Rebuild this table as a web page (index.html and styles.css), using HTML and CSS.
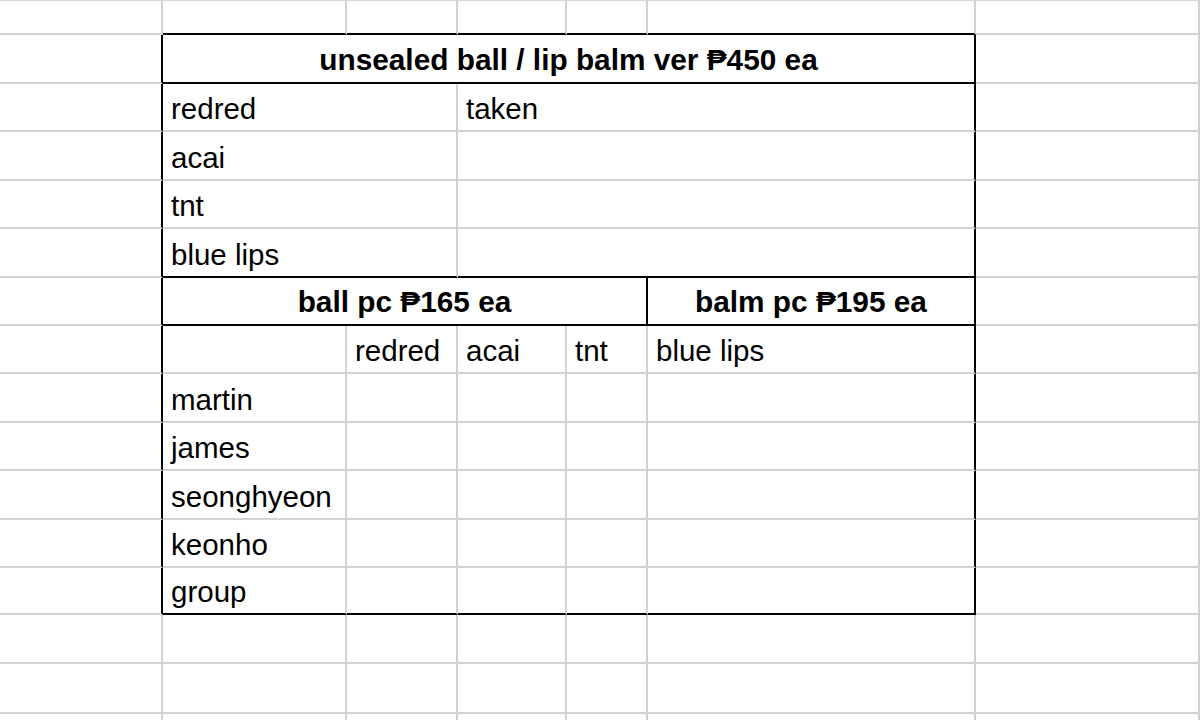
FILE: index.html
```html
<!DOCTYPE html>
<html>
<head>
<meta charset="utf-8">
<link rel="stylesheet" href="styles.css">
</head>
<body>
<div class="sheet">
  <!-- row 0 -->
  <div class="c"></div><div class="c bb"></div><div class="c bb"></div><div class="c bb"></div><div class="c bb"></div><div class="c bb"></div><div class="c"></div>
  <!-- row 1 header -->
  <div class="c br"></div><div class="c s5 bb br hd">unsealed ball / lip balm ver ₱450 ea</div><div class="c"></div>
  <!-- rows 2-5 -->
  <div class="c br"></div><div class="c s2">redred</div><div class="c s3 br">taken</div><div class="c"></div>
  <div class="c br"></div><div class="c s2">acai</div><div class="c s3 br"></div><div class="c"></div>
  <div class="c br"></div><div class="c s2">tnt</div><div class="c s3 br"></div><div class="c"></div>
  <div class="c br"></div><div class="c s2 bb">blue lips</div><div class="c s3 br bb"></div><div class="c"></div>
  <!-- row 6 -->
  <div class="c br"></div><div class="c s4 bb br hd">ball pc ₱165 ea</div><div class="c bb br hd">balm pc ₱195 ea</div><div class="c"></div>
  <!-- row 7 -->
  <div class="c br"></div><div class="c"></div><div class="c">redred</div><div class="c">acai</div><div class="c">tnt</div><div class="c br">blue lips</div><div class="c"></div>
  <!-- rows 8-12 -->
  <div class="c br"></div><div class="c">martin</div><div class="c"></div><div class="c"></div><div class="c"></div><div class="c br"></div><div class="c"></div>
  <div class="c br"></div><div class="c">james</div><div class="c"></div><div class="c"></div><div class="c"></div><div class="c br"></div><div class="c"></div>
  <div class="c br"></div><div class="c">seonghyeon</div><div class="c"></div><div class="c"></div><div class="c"></div><div class="c br"></div><div class="c"></div>
  <div class="c br"></div><div class="c">keonho</div><div class="c"></div><div class="c"></div><div class="c"></div><div class="c br"></div><div class="c"></div>
  <div class="c br"></div><div class="c bb">group</div><div class="c bb"></div><div class="c bb"></div><div class="c bb"></div><div class="c bb br"></div><div class="c"></div>
  <!-- rows 13-15 -->
  <div class="c"></div><div class="c"></div><div class="c"></div><div class="c"></div><div class="c"></div><div class="c"></div><div class="c"></div>
  <div class="c"></div><div class="c"></div><div class="c"></div><div class="c"></div><div class="c"></div><div class="c"></div><div class="c"></div>
  <div class="c"></div><div class="c"></div><div class="c"></div><div class="c"></div><div class="c"></div><div class="c"></div><div class="c"></div>
</div>
</body>
</html>
```

FILE: styles.css
```css
html, body {
  margin: 0;
  padding: 0;
  background: #ffffff;
  overflow: hidden;
}
.sheet {
  display: grid;
  grid-template-columns: 163px 184px 111px 109px 81px 328px 224px;
  grid-template-rows: 34px 49px 48px 49px 48px 49px 48px 48px 49px 48px 49px 48px 47px 49px 50px 48px;
  width: 1200px;
  height: 720px;
  overflow: hidden;
  border-top: 1px solid #d6d6d6;
  box-sizing: border-box;
  font-family: "Liberation Sans", Arial, "DejaVu Sans", sans-serif;
  font-size: 29.5px;
  line-height: 1;
  color: #000;
}
.c {
  box-sizing: border-box;
  border-right: 2px solid #d3d3d3;
  border-bottom: 2px solid #d3d3d3;
  display: flex;
  align-items: flex-end;
  padding: 0 8px 7px 8px;
  white-space: nowrap;
  overflow: visible;
}
.bb { border-bottom-color: #000; }
.br { border-right-color: #000; }
.s2 { grid-column: span 2; }
.s3 { grid-column: span 3; }
.s4 { grid-column: span 4; }
.s5 { grid-column: span 5; }
.hd {
  font-weight: bold;
  font-size: 29.8px;
  justify-content: center;
}
```
